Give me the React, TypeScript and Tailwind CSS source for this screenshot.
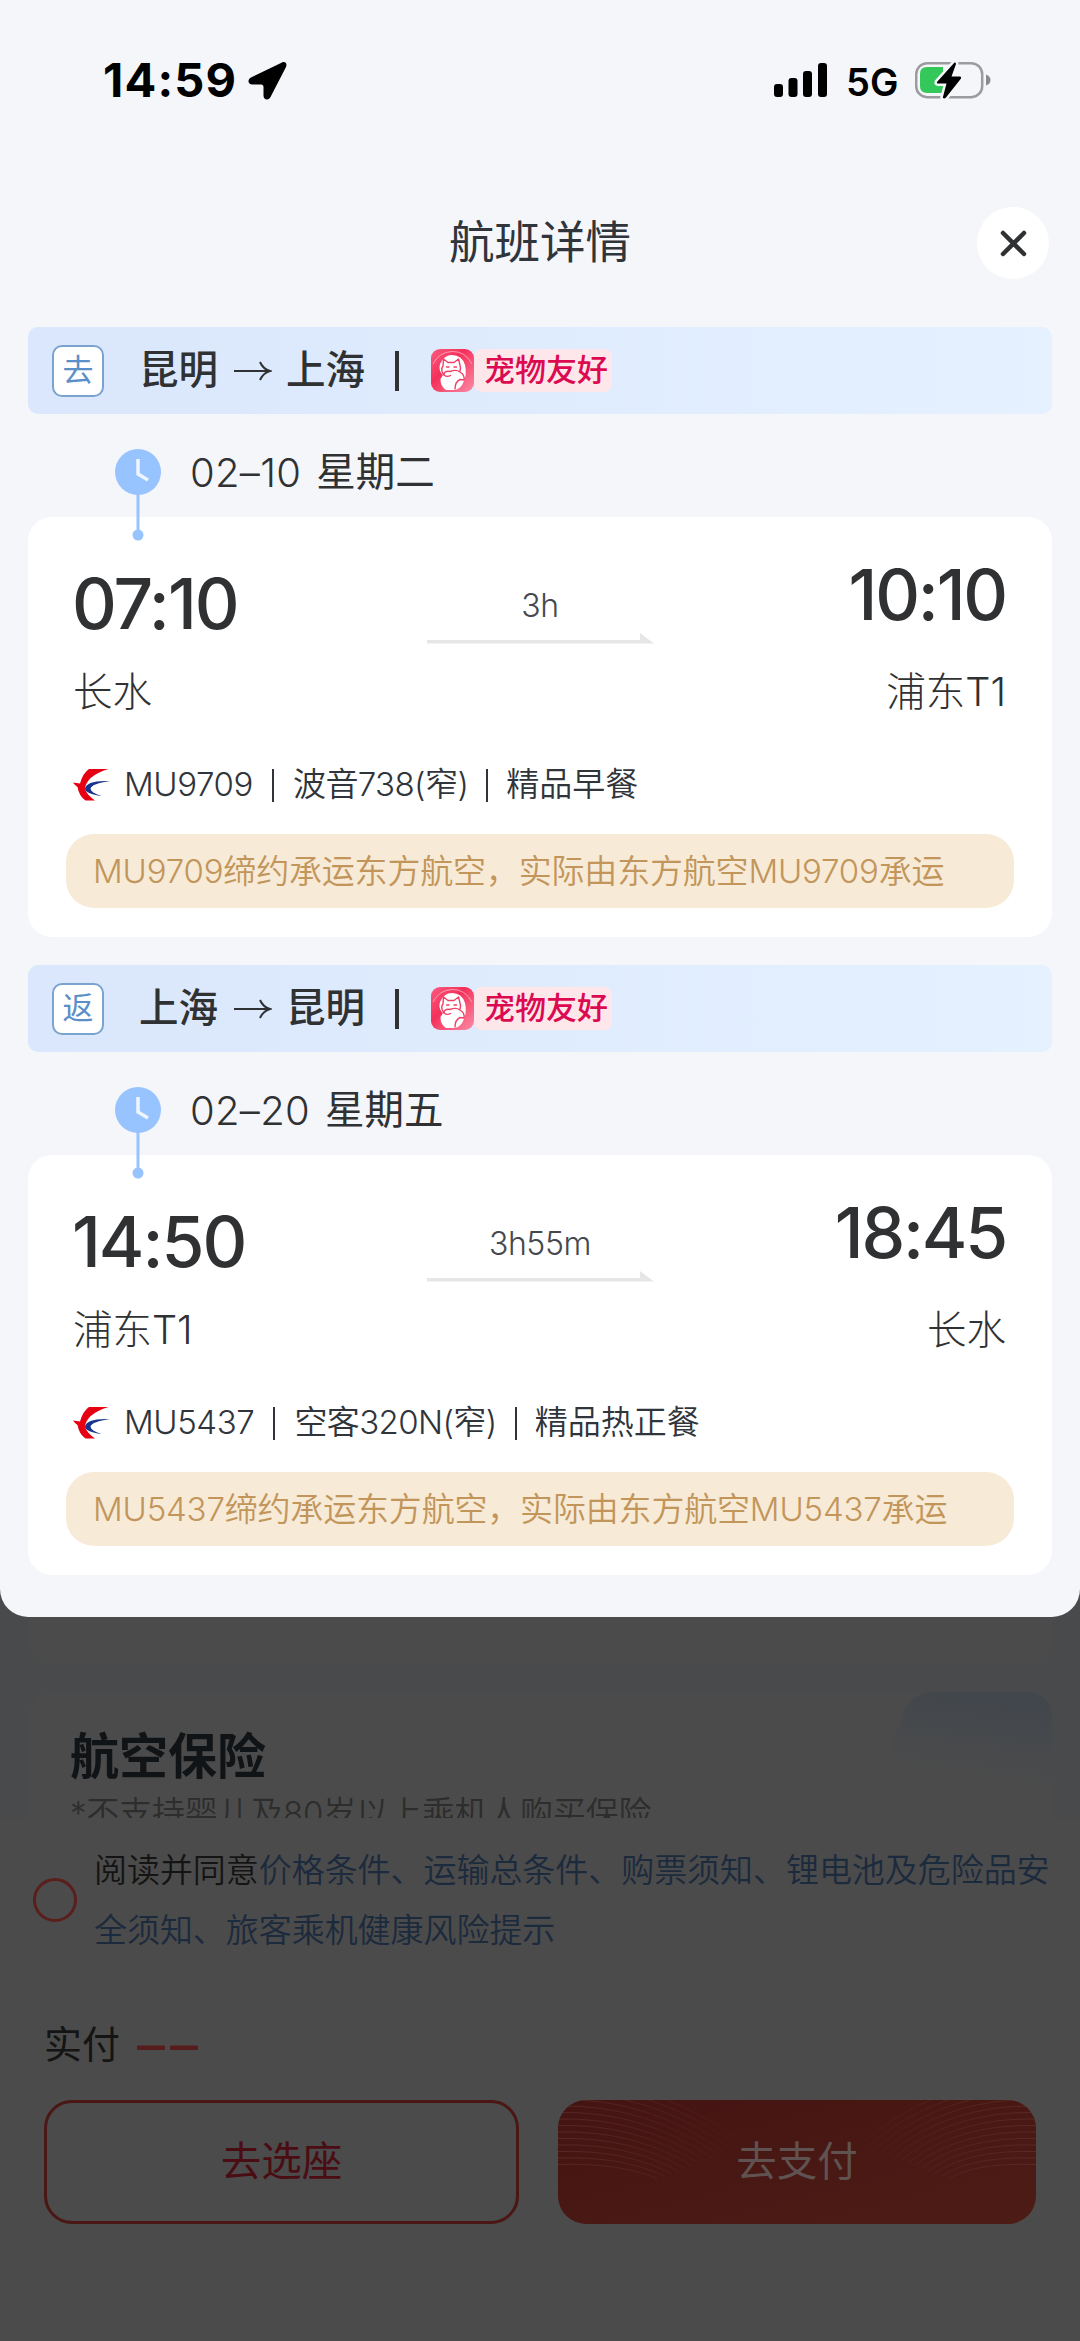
type Flight = {
  tag: string;
  from: string;
  to: string;
  date: string;
  week: string;
  depTime: string;
  arrTime: string;
  depAirport: string;
  arrAirport: string;
  duration: string;
  no: string;
  plane: string;
  meal: string;
};

const flights: Flight[] = [
  {
    tag: "去",
    from: "昆明",
    to: "上海",
    date: "02–10",
    week: "星期二",
    depTime: "07:10",
    arrTime: "10:10",
    depAirport: "长水",
    arrAirport: "浦东T1",
    duration: "3h",
    no: "MU9709",
    plane: "波音738(窄)",
    meal: "精品早餐",
  },
  {
    tag: "返",
    from: "上海",
    to: "昆明",
    date: "02–20",
    week: "星期五",
    depTime: "14:50",
    arrTime: "18:45",
    depAirport: "浦东T1",
    arrAirport: "长水",
    duration: "3h55m",
    no: "MU5437",
    plane: "空客320N(窄)",
    meal: "精品热正餐",
  },
];

function StatusBar() {
  return (
    <div className="flex h-[160px] items-start justify-between pl-[103px] pr-[88px] pt-[62px] text-black">
      <div className="flex h-[38px] items-center">
        <span className="-mt-[3px] w-[145px] whitespace-nowrap text-[47px] font-bold leading-none tracking-[1.200px]">14:59</span>
        <svg className="-mt-px" width="39" height="39" viewBox="0 0 39 39">
          <path
            d="M34 1.500 3 16.500C-1 19 0 23.500 4.500 23.500H13Q15.500 23.500 15.500 26V34.500C15.500 39 20.500 40 22.500 36L38 6C39.500 2.500 37 0 34 1.500Z"
            fill="#000"
          />
        </svg>
      </div>
      <div className="flex h-[36px] items-center">
        <svg width="54" height="35" viewBox="0 0 54 35">
          <rect x="0" y="21" width="9" height="13" rx="3" />
          <rect x="14.500" y="15" width="9" height="19" rx="3" />
          <rect x="29" y="8" width="9" height="26" rx="3" />
          <rect x="44" y="0" width="9" height="34" rx="3" />
        </svg>
        <span className="ml-[18px] mt-[3px] w-[69px] text-[38px] font-semibold leading-none">5G</span>
        <svg width="77" height="40" viewBox="0 0 77 40">
          <rect x="1.200" y="3.200" width="66" height="34" rx="11" fill="none" stroke="#9b9ba0" strokeWidth="2.500" />
          <path d="M12 7H28V33H12Q5 33 5 26V14Q5 7 12 7Z" fill="#34c759" />
          <path d="M71 14.500Q75.500 16 75.500 20T71 25.500Z" fill="#8a8a8f" />
          <path
            d="M39.500 2.500 22 22Q21.500 23.500 23 23.500H31.500L27.800 37.500Q29 39.500 31 37.500L46 18.500Q46.500 16.500 45 16.500H36.500L41 4Q41 2 39.500 2.500Z"
            fill="#000"
            stroke="#f4f6fa"
            strokeWidth="5"
            paintOrder="stroke"
            strokeLinejoin="round"
          />
        </svg>
      </div>
    </div>
  );
}

function PetBadge() {
  return (
    <div className="ml-[32px] flex h-[43px] items-center">
      <svg width="43" height="43" viewBox="0 0 43 43">
        <defs>
          <linearGradient id="pet" x1="0" y1="0" x2="1" y2="1">
            <stop offset="0" stopColor="#fb5d80" />
            <stop offset="0.400" stopColor="#f5305a" />
            <stop offset="1" stopColor="#fb8ca6" />
          </linearGradient>
        </defs>
        <rect width="43" height="43" rx="9" fill="url(#pet)" />
        <path d="M2 15Q8 3 21 2.500T41 15" fill="none" stroke="#fc9db2" strokeWidth="1" />
        <path
          d="M9 15Q13 6 21 6Q31 6 34 16Q36 25 33 32Q30 40 24 41H15Q9 37 9.500 30L12 26Q7 22 9 15Z"
          fill="#fff"
        />
        <path
          d="M13 26Q9 21 12 17L12.500 10 17 13.500H23L27.500 10 29 16Q30 19 29 22M15.500 18H18M23 18H25.500M13 26Q13 21.500 19 22.500Q25 20 29 23Q34 26 33 31L29 30.500M13 26Q16 28.500 19.500 26.500M29 30.500Q24 33 24 40"
          fill="none"
          stroke="#ee4168"
          strokeWidth="1.400"
          strokeLinecap="round"
          strokeLinejoin="round"
        />
      </svg>
      <span className="flex h-[43px] w-[138px] items-center whitespace-nowrap rounded-lg bg-[#fde7ea] pl-[10px] text-[31px] font-medium text-[#dc0a50]">
        宠物友好
      </span>
    </div>
  );
}

function AirlineLogo() {
  return (
    <svg width="38" height="34" viewBox="0 0 38 34">
      <path
        d="M35.500 1H16Q10 5 7 15.500L0 14.500Q2 17.500 4.500 19Q6 28 12.500 32.500H22Q14 27 12 21Q13 8 35.500 1Z"
        fill="#e60012"
      />
      <path d="M37 13Q13 12 12 21Q13 26 28.500 28Q17.500 24.500 17.500 20.500Q19 15.500 37 13Z" fill="#17338f" />
    </svg>
  );
}

function FlightSection({ flight }: { flight: Flight }) {
  return (
    <section className="h-[638px]">
      <div className="flex h-[87px] items-center rounded-[10px] bg-gradient-to-r from-[#dae7fc] to-[#e5f1ff] pl-[24px]">
        <span className="flex size-[52px] items-center justify-center rounded-[10px] border-2 border-[#7ba3cf] bg-white text-[31px] text-[#5b8fc9]">
          {flight.tag}
        </span>
        <div className="ml-[35px] flex items-center text-[39.500px] font-medium text-[#303133]">
          <span>{flight.from}</span>
          <svg className="mx-[14.500px]" width="39" height="24" viewBox="0 0 39 24">
            <path d="M1 12H37M27 3Q30 10 37 12Q30 14 27 21" fill="none" stroke="#303133" strokeWidth="2" />
          </svg>
          <span>{flight.to}</span>
          <span className="ml-[30px] h-[40px] w-[4px] bg-[#303133]" />
        </div>
        <PetBadge />
      </div>

      <div className="relative z-10 flex h-[103px] items-start pl-[86px] pt-[35px]">
        <svg className="-mb-8 shrink-0" width="48" height="94" viewBox="0 0 48 94">
          <circle cx="24" cy="23" r="23" fill="#97c3ff" />
          <path d="M24 10V25L34 31" fill="none" stroke="#eef5ff" strokeWidth="3.500" />
          <path d="M24 44V86" stroke="#97c3ff" strokeWidth="3" />
          <circle cx="24" cy="86" r="5.500" fill="#97c3ff" />
        </svg>
        <div className="ml-[28px] flex h-[48px] items-center gap-[15px] text-[39.500px] text-[#303133]">
          <span className="whitespace-nowrap text-[40px] font-[350] tracking-[0.3px]">{flight.date}</span>
          <span>{flight.week}</span>
        </div>
      </div>

      <div className="h-[420px] rounded-[24px] bg-white px-[38px] pt-[52px]">
        <div className="flex h-[148px] justify-between pl-[7px] pr-[7px]">
          <div className="w-[280px]">
            <div className="-ml-px pt-[9px] text-[69.500px] font-medium leading-[52px] tracking-[-2px] text-[#303133]">{flight.depTime}</div>
            <div className="mt-[37px] text-[39.500px] font-light leading-[50px] text-[#303133]">{flight.depAirport}</div>
          </div>
          <div className="flex w-[227px] flex-col items-center pt-[18px]">
            <span className="text-[32px] font-light leading-[38px] tracking-[-0.4px] text-[#45484d]">{flight.duration}</span>
            <svg className="mt-[8px] shrink-0" width="227" height="11" viewBox="0 0 227 11">
              <path d="M0 7H213V0L227 10.500H0Z" fill="#e6e6e6" />
            </svg>
          </div>
          <div className="w-[280px] text-right">
            <div className="pr-px text-[69.500px] font-medium leading-[52px] tracking-[-2.200px] text-[#303133]">{flight.arrTime}</div>
            <div className="mt-[46px] pr-px text-[39.500px] font-light leading-[50px] text-[#303133]">{flight.arrAirport}</div>
          </div>
        </div>
        <div className="mt-[51px] flex h-[34px] items-center whitespace-nowrap pl-[7px] text-[33px] font-[350] tracking-[-0.4px] text-[#30343b]">
          <AirlineLogo />
          <span className="ml-[13px]">{flight.no}</span>
          <span className="mx-[19px] h-[33px] w-[2px] bg-[#30343b]" />
          <span className="tracking-[-0.600px]">{flight.plane}</span>
          <span className="mx-[18px] h-[33px] w-[2px] bg-[#30343b]" />
          <span className="tracking-normal">{flight.meal}</span>
        </div>
        <div className="mt-[32px] flex h-[74px] items-center whitespace-nowrap rounded-[28px] bg-[#f7ead7] pl-[27px] pt-px text-[33px] font-[350] tracking-[-0.180px] text-[#c2955a]">
          {flight.no}缔约承运东方航空，实际由东方航空{flight.no}承运
        </div>
      </div>
    </section>
  );
}

const waves = [0, 1, 2, 3, 4, 5, 6, 7, 8, 9, 10, 11, 12, 13];

// decorative wave lines, fading out towards the button's centre
function Waves() {
  return (
    <svg className="absolute inset-0" width="478" height="124" viewBox="0 0 478 124" fill="none">
      <defs>
        <linearGradient id="waveL" gradientUnits="userSpaceOnUse" x1="0" y1="0" x2="190" y2="0">
          <stop offset="0" stopColor="#5f3632" stopOpacity="0.600" />
          <stop offset="1" stopColor="#5f3632" stopOpacity="0.050" />
        </linearGradient>
        <linearGradient id="waveR" gradientUnits="userSpaceOnUse" x1="478" y1="0" x2="288" y2="0">
          <stop offset="0" stopColor="#5f3632" stopOpacity="0.600" />
          <stop offset="1" stopColor="#5f3632" stopOpacity="0.050" />
        </linearGradient>
      </defs>
      {waves.map((i) => (
        <g key={i}>
          <path d={`M0 ${-20 + i * 6.5}Q${100 - i * 3} ${-22 + i * 6.5} ${190 - i * 7} ${46 + i * 2.5}`} stroke="url(#waveL)" />
          <path d={`M478 ${-20 + i * 6.5}Q${378 + i * 3} ${-22 + i * 6.5} ${300 + i * 7} ${46 + i * 2.5}`} stroke="url(#waveR)" />
        </g>
      ))}
    </svg>
  );
}

function DimmedPage() {
  return (
    <div className="-mt-[30px] flex h-[754px] flex-col bg-[#484a4c]">
      <div className="mx-[28px] h-[78px] shrink-0 rounded-b-[24px] bg-[#4b4b4b]" />
      <div className="relative mx-[28px] mt-[27px] h-[126px] shrink-0 overflow-hidden rounded-t-[24px] bg-[#4b4b4b] pl-[42px] pt-[35px]">
        <svg className="absolute right-0 top-0" width="190" height="127" viewBox="0 0 190 127">
          <defs>
            <linearGradient id="corner" x1="0.700" y1="0" x2="0.500" y2="1">
              <stop offset="0" stopColor="#42474d" />
              <stop offset="0.700" stopColor="#4b4b4b" />
            </linearGradient>
          </defs>
          <path d="M0 127Q28 60 40 24Q48 0 72 0H190V127Z" fill="url(#corner)" />
        </svg>
        <div className="relative text-[49px] font-bold leading-[60px] text-[#111417]">航空保险</div>
        <div className="relative mt-[2px] whitespace-nowrap text-[33px] font-[350] leading-[48px] tracking-[-0.200px] text-[#2d2d2d]">
          *不支持婴儿及80岁以上乘机人购买保险
        </div>
      </div>
      <div className="flex-1 bg-[#4b4b4b]">
        <div className="flex items-center pl-[33px] pt-[22px]">
          <span className="size-[44px] shrink-0 rounded-full border-[3px] border-[#5a1f1c]" />
          <div className="ml-[17px] whitespace-nowrap text-[33px] font-[350] leading-[60px] tracking-[-0.050px] text-[#1c2a3d]">
            <div className="flex">
              <span className="text-[#141414]">阅读并同意</span>
              <span>价格条件、运输总条件、购票须知、锂电池及危险品安</span>
            </div>
            <div>全须知、旅客乘机健康风险提示</div>
          </div>
        </div>
        <div className="mt-[54px] flex h-[60px] items-center pl-[44px] text-[38px] text-[#141414]">
          <span>实付</span>
          <span className="ml-[17px] mt-[2px] text-[56px] leading-none tracking-[5px] text-[#561d1c] [font-feature-settings:'calt'_0]">––</span>
        </div>
        <div className="flex gap-[39px] pl-[44px] pt-[26px]">
          <div className="flex h-[124px] w-[475px] items-center justify-center rounded-[28px] border-[3px] border-[#4a1715] pt-px text-[40.500px] text-[#4a0d14]">
            去选座
          </div>
          <div className="relative flex h-[124px] w-[478px] items-center justify-center overflow-hidden rounded-[28px] bg-gradient-to-br from-[#441413] to-[#4d1c15] pt-px text-[40.500px] text-[#5f5251]">
            <Waves />
            <span className="relative">去支付</span>
          </div>
        </div>
      </div>
    </div>
  );
}

export default function App() {
  return (
    <div className="h-[2341px] w-[1080px] overflow-hidden bg-[#484a4c] font-['Inter','Noto_Sans_CJK_SC',sans-serif]">
      <div className="relative z-10 h-[1617px] rounded-b-[28px] bg-[#f4f6fa]">
        <StatusBar />
        <div className="flex h-[167px] items-start px-[31px] pt-[47px]">
          <h1 className="flex h-[72px] flex-1 items-center justify-center pt-px text-[45.500px] text-[#30343b]">航班详情</h1>
          <button className="-ml-[72px] flex size-[72px] items-center justify-center rounded-full bg-white">
            <svg width="27" height="27" viewBox="0 0 27 27">
              <path d="M3 3 24 24M24 3 3 24" stroke="#303133" strokeWidth="4.500" strokeLinecap="round" />
            </svg>
          </button>
        </div>
        <div className="mx-[28px]">
          {flights.map((flight) => (
            <FlightSection key={flight.no} flight={flight} />
          ))}
        </div>
      </div>
      <DimmedPage />
    </div>
  );
}
